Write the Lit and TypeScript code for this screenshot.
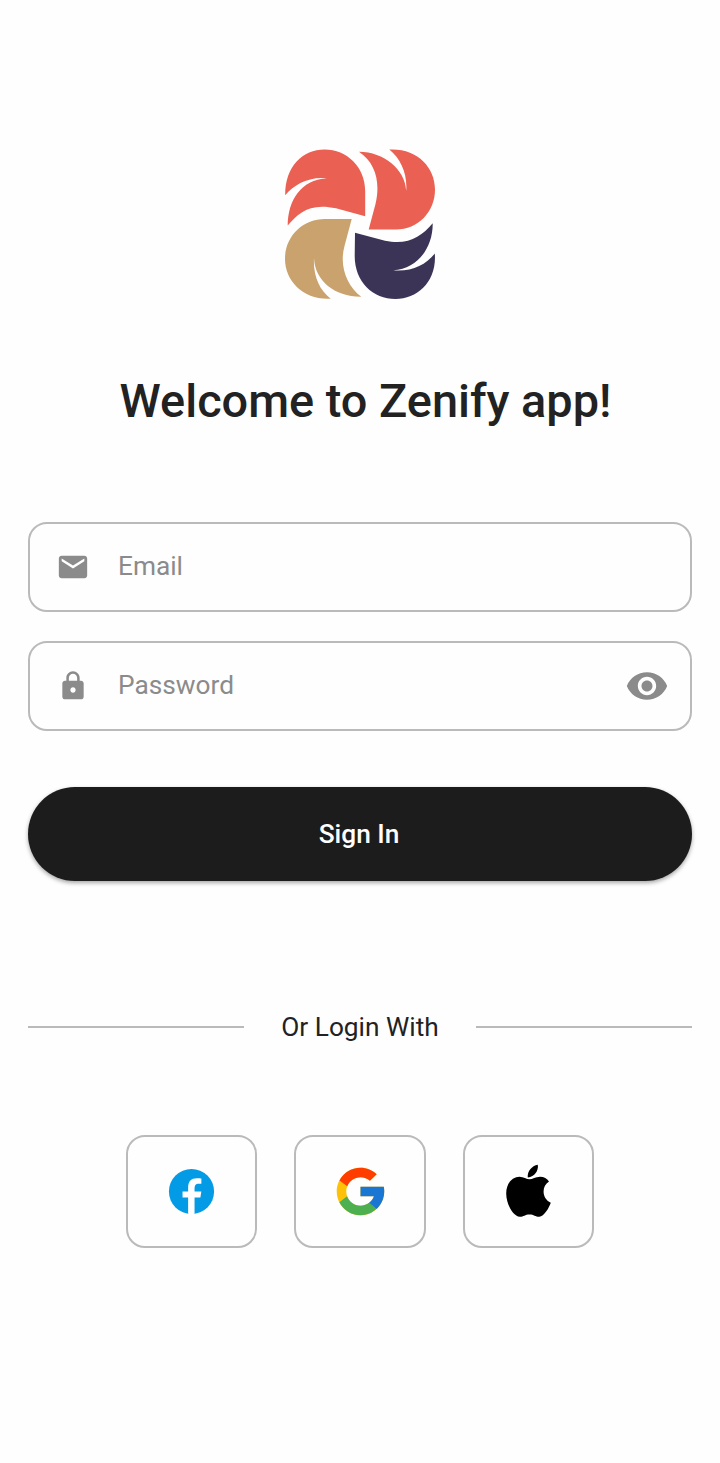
import { LitElement, html, css, svg } from "lit";
import { customElement } from "lit/decorators.js";

const logo = svg`
  <path fill="#ea6052" d="M285.2 195.3C285 166 303 149.5 324.5 149.5C347 149.5 365.2 167 365.2 191V216.2L336 208.3C310 202.500 298 213 287.700 225.500C288 200 301 180 326.700 178.300C308 176.500 294 185 285.200 195.300Z"/>
  <path fill="#ea6052" d="M359 151.700C384 152 405 169 406.200 190.700C407.500 174 401 159 389.300 149.500C417 148 435 167 435 189.500C435 212 418 229.500 396 229.500H368.700L375.500 204C380.500 183 376 163 359 151.700Z"/>
  <path fill="#caa26d" d="M351.700 219L344.500 246C339 266 347 286 361.300 296.700C335 297 315 281 314 258.300C313 275 319 290 330.700 298.700C305 300.500 285 282 285 259C285 236 303 219 325 219Z"/>
  <path fill="#3b3456" d="M355 232.700L385 240.800C408 245.500 421 237 432.700 223.300C433 247 418 269 393.300 270.300C411 272 426 265 434.800 253.500C437 281 418 299 395.500 299C373 299 354.700 282 354.700 256Z"/>`;

const mail = svg`<path d="M20 4H4c-1.1 0-1.990.9-1.990 2L2 18c0 1.100.9 2 2 2h16c1.100 0 2-.9 2-2V6c0-1.100-.9-2-2-2zm0 4l-8 5-8-5V6l8 5 8-5v2z"/>`;
const lock = svg`<path d="M18 8h-1V6c0-2.760-2.240-5-5-5S7 3.240 7 6v2H6c-1.100 0-2 .9-2 2v10c0 1.100.9 2 2 2h12c1.100 0 2-.9 2-2V10c0-1.100-.9-2-2-2zm-6 9c-1.100 0-2-.9-2-2s.9-2 2-2 2 .9 2 2-.9 2-2 2zm3.100-9H8.900V6c0-1.710 1.390-3.100 3.100-3.100 1.710 0 3.100 1.390 3.100 3.100v2z"/>`;
const eye = svg`<path d="M12 4.500C7 4.500 2.730 7.610 1 12c1.730 4.390 6 7.500 11 7.500s9.270-3.110 11-7.500c-1.730-4.390-6-7.500-11-7.500zM12 17c-2.760 0-5-2.240-5-5s2.240-5 5-5 5 2.240 5 5-2.240 5-5 5zm0-8c-1.660 0-3 1.340-3 3s1.340 3 3 3 3-1.340 3-3-1.340-3-3-3z"/>`;

const facebook = svg`
  <circle cx="24" cy="24" r="19" fill="#039be5"/>
  <path fill="#fff" d="M26.572 29.036h4.917l.772-4.995h-5.690v-2.730c0-2.075.678-3.915 2.619-3.915h3.119v-4.359c-.548-.074-1.707-.236-3.897-.236-4.573 0-7.254 2.415-7.254 7.917v3.323h-4.701v4.995h4.701v13.729c.931.140 1.874.235 2.842.235.875 0 1.729-.080 2.572-.194z"/>`;
const google = svg`
  <path fill="#ffc107" d="M43.611 20.083H42V20H24v8h11.303c-1.649 4.657-6.080 8-11.303 8-6.627 0-12-5.373-12-12s5.373-12 12-12c3.059 0 5.842 1.154 7.961 3.039l5.657-5.657C34.046 6.053 29.268 4 24 4 12.955 4 4 12.955 4 24s8.955 20 20 20 20-8.955 20-20c0-1.341-.138-2.650-.389-3.917z"/>
  <path fill="#ff3d00" d="M6.306 14.691l6.571 4.819C14.655 15.108 18.961 12 24 12c3.059 0 5.842 1.154 7.961 3.039l5.657-5.657C34.046 6.053 29.268 4 24 4 16.318 4 9.656 8.337 6.306 14.691z"/>
  <path fill="#4caf50" d="M24 44c5.166 0 9.860-1.977 13.409-5.192l-6.190-5.238C29.211 35.091 26.715 36 24 36c-5.202 0-9.619-3.317-11.283-7.946l-6.522 5.025C9.505 39.556 16.227 44 24 44z"/>
  <path fill="#1976d2" d="M43.611 20.083H42V20H24v8h11.303c-.792 2.237-2.231 4.166-4.087 5.571l6.193 5.238C36.971 39.205 44 34 44 24c0-1.341-.138-2.650-.389-3.917z"/>`;
const apple = svg`
  <path d="M537.8 1164.8C538.800 1170.500 534.500 1177 527.800 1177.500C527 1171.500 531.800 1165.800 537.800 1164.800Z"/>
  <path d="M529.500 1179.300C532.500 1179.300 535.500 1176.700 540 1176.700C544 1176.700 547 1178.500 549 1181.500C541.500 1186 541.500 1198.500 550.800 1202.800C549 1208 544 1216.500 539.300 1216.800C535.500 1216.900 534 1214.500 529.500 1214.500C525 1214.500 523.500 1216.900 519.800 1216.800C513 1216.300 506.200 1204 506.200 1193.500C506.200 1182.500 513 1176.700 519.500 1176.700C523.500 1176.700 526.500 1179.300 529.500 1179.300Z"/>`;

@customElement("app-root")
export class AppRoot extends LitElement {
  static styles = css`
    :host {
      display: flex;
      flex-direction: column;
      box-sizing: border-box;
      height: 1463px;
      padding: 149px 28px 0;
      background: #fefefe;
      color: #222;
      font-family: Roboto, sans-serif;
      font-size: 26.25px;
    }
    svg { display: block; flex: none; }
    .logo { align-self: center; width: 150px; height: 150px; }
    h1 {
      margin: 74px 0 0;
      padding-left: 11px;
      height: 56px;
      line-height: 56px;
      font-size: 46.875px;
      font-weight: 500;
      text-align: center;
      white-space: nowrap;
    }
    .fields { display: flex; flex-direction: column; gap: 29px; margin-top: 93px; }
    .field {
      box-sizing: border-box;
      height: 90px;
      display: flex;
      align-items: center;
      padding: 0 21px 0 26px;
      border: 2px solid #bababa;
      border-radius: 19px;
      color: #8b8b8b;
      fill: #8b8b8b;
    }
    .field svg { width: 34px; height: 34px; }
    .field svg.lock { width: 32px; height: 32px; margin: 0 1px; }
    .field svg.eye { width: 44px; height: 44px; }
    .label { flex: 1; padding: 0 0 2px 28px; line-height: 32px; }
    button {
      margin-top: 56px;
      height: 94px;
      border: 0;
      border-radius: 47px;
      background: #1c1c1c;
      color: #fff;
      font: 500 26.25px/32px Roboto, sans-serif;
      box-shadow: 0 2px 4px rgba(0, 0, 0, 0.35);
      padding: 0 2px 0 0;
    }
    .divider { display: flex; align-items: center; margin-top: 130px; height: 32px; }
    .line { flex: none; width: 216px; height: 2px; background: #bababa; }
    .caption { flex: 1; text-align: center; white-space: nowrap; line-height: 32px; }
    .social { display: flex; justify-content: center; gap: 37.5px; margin-top: 92px; }
    .tile {
      box-sizing: border-box;
      width: 131.25px;
      height: 113px;
      display: flex;
      align-items: center;
      justify-content: center;
      border: 2px solid #bababa;
      border-radius: 19px;
    }
    .tile svg { width: 57px; height: 57px; }
    .tile svg.apple { width: 56px; height: 56px; }
  `;

  render() {
    return html`
      <svg class="logo" viewBox="285 149 150 150">${logo}</svg>
      <h1>Welcome to Zenify app!</h1>
      <div class="fields">
        <div class="field">
          <svg viewBox="0 0 24 24">${mail}</svg>
          <span class="label">Email</span>
        </div>
        <div class="field">
          <svg class="lock" viewBox="0 0 24 24">${lock}</svg>
          <span class="label">Password</span>
          <svg class="eye" viewBox="0 0 24 24">${eye}</svg>
        </div>
      </div>
      <button>Sign In</button>
      <div class="divider">
        <span class="line"></span>
        <span class="caption">Or Login With</span>
        <span class="line"></span>
      </div>
      <div class="social">
        <div class="tile"><svg viewBox="0 0 48 48">${facebook}</svg></div>
        <div class="tile"><svg viewBox="0 0 48 48">${google}</svg></div>
        <div class="tile"><svg class="apple" viewBox="501 1164 56 56">${apple}</svg></div>
      </div>
    `;
  }
}
